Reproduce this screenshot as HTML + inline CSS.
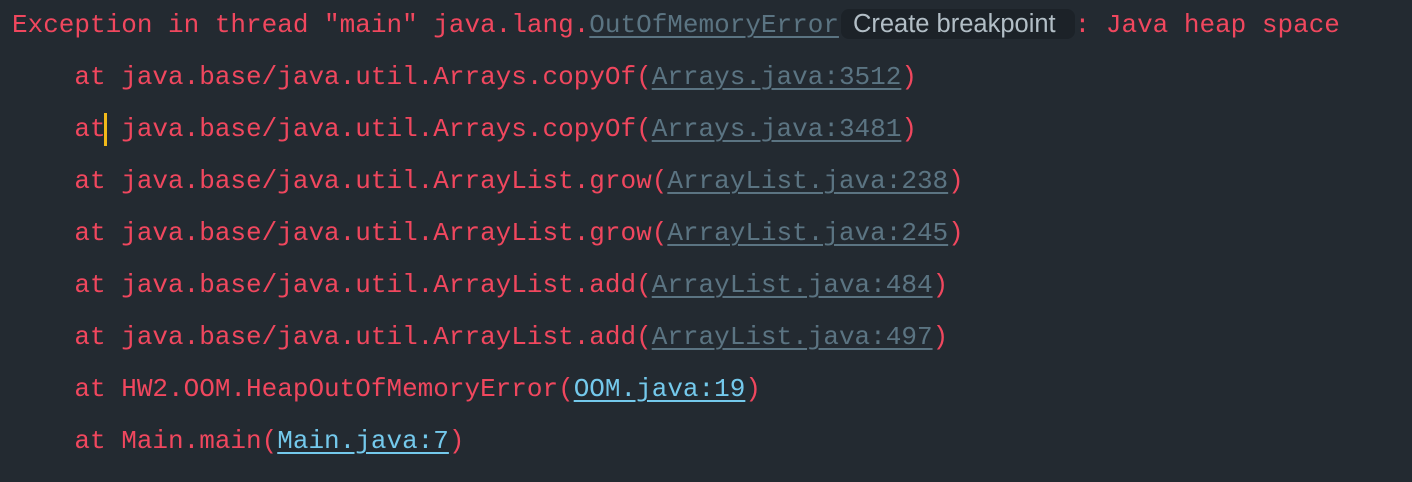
<!DOCTYPE html>
<html><head><style>
html,body{margin:0;padding:0;background:#232a31;width:1412px;height:482px;overflow:hidden}
.l{position:absolute;left:12px;font-family:"Liberation Mono",monospace;font-size:26px;line-height:52px;color:#f0475e;white-space:pre}
.g{color:#5b7482;text-decoration:underline;text-underline-offset:4px;text-decoration-thickness:2px}
.b{color:#74c9ec;text-decoration:underline;text-underline-offset:4px;text-decoration-thickness:2px}
.bp{display:inline-block;background:#1c2228;color:#b2bec6;font-family:"Liberation Sans",sans-serif;font-size:25.5px;line-height:29px;padding:1px 19px 0 12px;border-radius:8px;margin:0 0 0 2px;vertical-align:0px}
.cur{position:absolute;left:104px;top:113px;width:3px;height:33px;background:#f2b91a}
</style></head><body>
<div class="l" style="top:-1px">Exception in thread "main" java.lang.<span class="g">OutOfMemoryError</span><span class="bp">Create breakpoint</span>: Java heap space</div>
<div class="l" style="top:51px">    at java.base/java.util.Arrays.copyOf(<span class="g">Arrays.java:3512</span>)</div>
<div class="l" style="top:103px">    at java.base/java.util.Arrays.copyOf(<span class="g">Arrays.java:3481</span>)</div>
<div class="l" style="top:155px">    at java.base/java.util.ArrayList.grow(<span class="g">ArrayList.java:238</span>)</div>
<div class="l" style="top:207px">    at java.base/java.util.ArrayList.grow(<span class="g">ArrayList.java:245</span>)</div>
<div class="l" style="top:259px">    at java.base/java.util.ArrayList.add(<span class="g">ArrayList.java:484</span>)</div>
<div class="l" style="top:311px">    at java.base/java.util.ArrayList.add(<span class="g">ArrayList.java:497</span>)</div>
<div class="l" style="top:363px">    at HW2.OOM.HeapOutOfMemoryError(<span class="b">OOM.java:19</span>)</div>
<div class="l" style="top:415px">    at Main.main(<span class="b">Main.java:7</span>)</div>
<div class="cur"></div>
</body></html>
